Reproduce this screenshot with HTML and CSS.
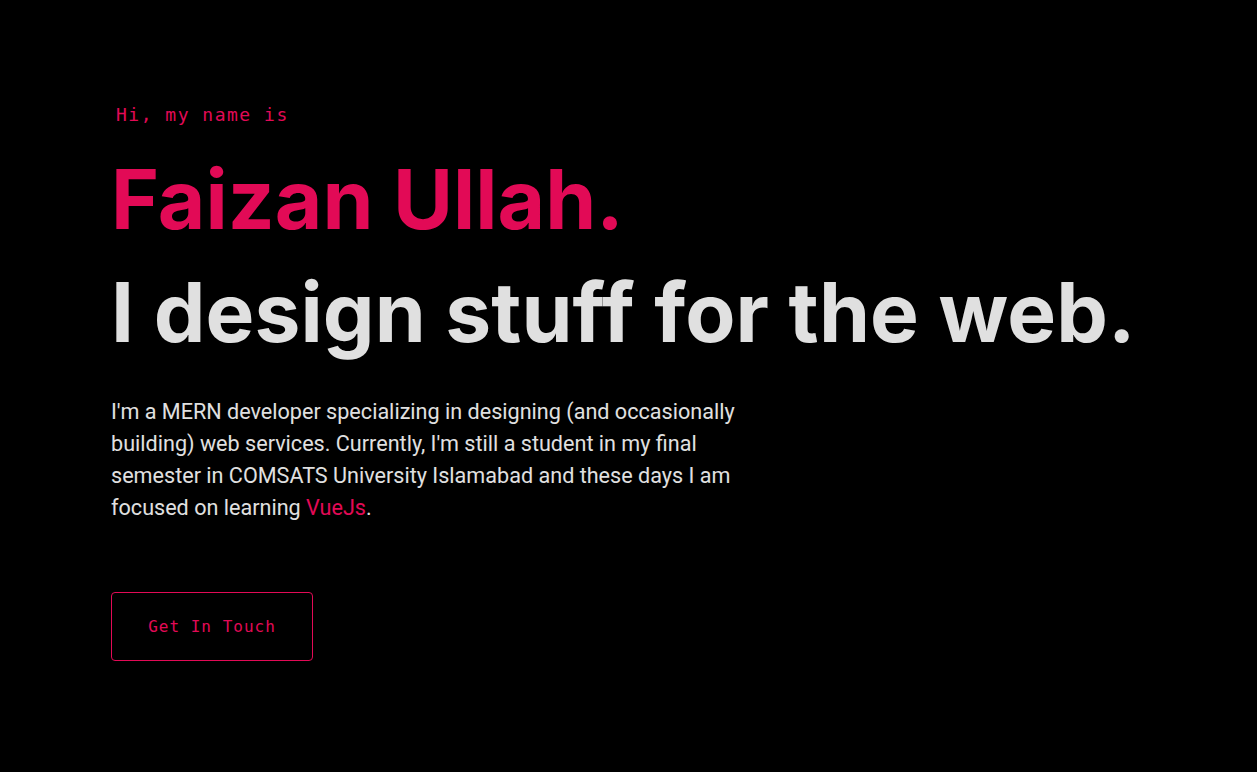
FILE: index.html
```html
<!DOCTYPE html>
<html lang="en">
<head>
<meta charset="utf-8">
<title>Faizan Ullah</title>
<link rel="stylesheet" href="styles.css">
</head>
<body>
<main class="hero">
  <p class="hello">Hi, my name is</p>
  <h1 class="name">Faizan Ullah.</h1>
  <h2 class="tagline">I design stuff for the web.</h2>
  <p class="about">I'm a MERN developer specializing in designing (and occasionally building) web services. Currently, I'm still a student in my final semester in COMSATS University Islamabad and these days I am focused on learning <a class="link" href="#">VueJs</a>.</p>
  <a class="cta" href="#">Get In Touch</a>
</main>
</body>
</html>
```
FILE: styles.css
```css
html, body {
  margin: 0;
  background: #000;
  height: 100%;
}
.hero {
  padding: 100px 0 0 111px;
  display: flex;
  flex-direction: column;
  align-items: flex-start;
}
.hello {
  margin: 0 0 0 5px;
  font-family: "DejaVu Sans Mono", monospace;
  font-size: 18px;
  letter-spacing: 1.5px;
  color: #e20a56;
  line-height: 30px;
}
.name {
  margin: 29px 0 0 0;
  font-family: Inter, sans-serif;
  font-weight: 700;
  font-size: 82px;
  line-height: 1;
  letter-spacing: 0.05px;
  color: #e20a56;
}
.tagline {
  margin: 31px 0 0 0;
  font-family: Inter, sans-serif;
  font-weight: 700;
  font-size: 82px;
  line-height: 1;
  letter-spacing: 0.1px;
  color: #e0e0e0;
}
.about {
  margin: 42px 0 0 0;
  max-width: 640px;
  font-family: Roboto, sans-serif;
  font-size: 21.6px;
  line-height: 32px;
  color: #e0e0e0;
}
.link {
  color: #e20a56;
  text-decoration: none;
}
.cta {
  margin-top: 68px;
  width: 200px;
  height: 67px;
  display: flex;
  align-items: center;
  justify-content: center;
  border: 1px solid #e20a56;
  border-radius: 4px;
  font-family: "DejaVu Sans Mono", monospace;
  font-size: 16px;
  letter-spacing: 1px;
  color: #e20a56;
  text-decoration: none;
}
```
